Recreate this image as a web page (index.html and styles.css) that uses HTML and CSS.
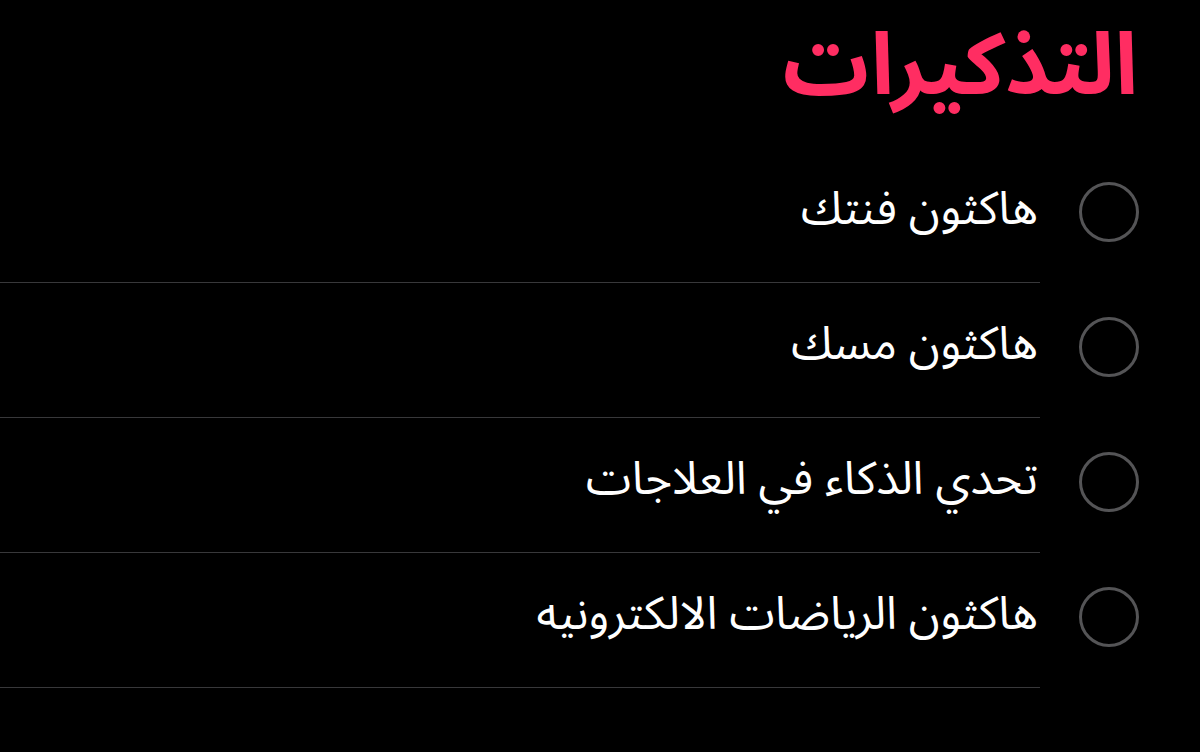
FILE: index.html
```html
<!DOCTYPE html>
<html lang="ar" dir="rtl">
<head>
<meta charset="utf-8">
<title>التذكيرات</title>
<link rel="stylesheet" href="styles.css">
</head>
<body>
<main class="screen">
  <h1 class="title">التذكيرات</h1>
  <ul class="list">
    <li class="row"><span class="check"><span class="circle"></span></span><span class="content"><span class="label">هاكثون فنتك</span></span></li>
    <li class="row"><span class="check"><span class="circle"></span></span><span class="content"><span class="label">هاكثون مسك</span></span></li>
    <li class="row"><span class="check"><span class="circle"></span></span><span class="content"><span class="label">تحدي الذكاء في العلاجات</span></span></li>
    <li class="row"><span class="check"><span class="circle"></span></span><span class="content"><span class="label">هاكثون الرياضات الالكترونيه</span></span></li>
  </ul>
</main>
</body>
</html>
```
FILE: styles.css
```css
html, body {
  margin: 0;
  padding: 0;
  background: #000;
}
body {
  width: 1200px;
  height: 752px;
  overflow: hidden;
  font-family: "Noto Sans Arabic", "DejaVu Sans", sans-serif;
  color: #fff;
}
.screen {
  display: flex;
  flex-direction: column;
}
.title {
  margin: 0;
  height: 148px;
  box-sizing: border-box;
  padding: 0 62px 0 0;
  font-size: 86px;
  font-weight: 700;
  line-height: 134px;
  color: #ff2d62;
}
.list {
  list-style: none;
  margin: 0;
  padding: 0;
  display: flex;
  flex-direction: column;
}
.row {
  display: flex;
  height: 135px;
}
.check {
  width: 160px;
  box-sizing: border-box;
  padding: 34px 61px 0 0;
  display: flex;
}
.circle {
  width: 60px;
  height: 60px;
  box-sizing: border-box;
  border: 3px solid #545456;
  border-radius: 50%;
}
.content {
  flex: 1;
  display: flex;
  align-items: flex-start;
  border-bottom: 1px solid #38383a;
  padding: 32px 2px 0 0;
}
.label {
  font-size: 46px;
  line-height: 60px;
}
```
